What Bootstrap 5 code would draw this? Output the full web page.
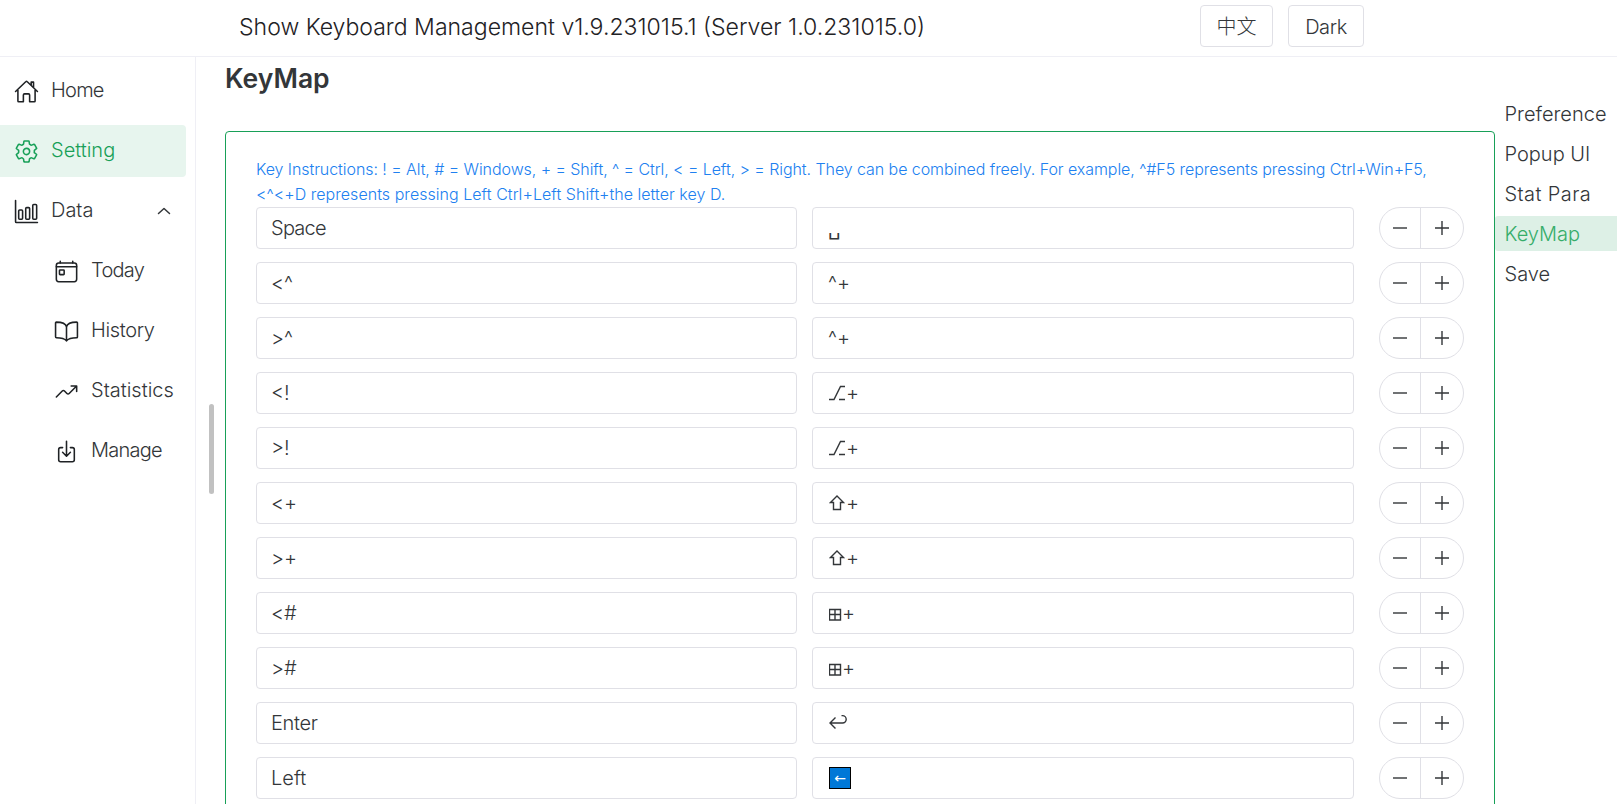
<!DOCTYPE html>
<html lang="en">
<head>
<meta charset="utf-8">
<title>Show Keyboard Management</title>
<link href="https://cdn.jsdelivr.net/npm/bootstrap@5.3.0/dist/css/bootstrap.min.css" rel="stylesheet">
<style>
  body { font-family: Inter, "Noto Sans CJK SC", "DejaVu Sans", sans-serif; font-size: 20px; font-weight: 300; color: #333639; line-height: 1.5; height: 804px; overflow: hidden; }
  .topbar { height: 57px; border-bottom: 1px solid #efeff5; padding-left: 239px; }
  .app-title { width: 961px; font-size: 23.05px; color: #1f2225; padding-bottom: 2px; }
  .topbar .btn { height: 42px; padding: 1px 0 0; font-size: 20px; font-weight: 300; color: #333639; border: 1px solid #e0e0e6; border-radius: 4px; margin: 5px 15px 0 0; }
  .topbar .btn + .btn { letter-spacing: -.4px; }
  .side { width: 196px; border-right: 1px solid #efeff5; padding-top: 8px; }
  .side a { display: flex; align-items: center; height: 52px; width: 186px; margin-bottom: 8px; padding-left: 14px; border-radius: 0 4px 4px 0; color: #333639; text-decoration: none; }
  .side a.sub { padding-left: 54px; }
  .side a span { margin-left: 12px; padding-bottom: 2px; }
  .side svg { width: 25px; height: 25px; fill: none; stroke: #1f2225; stroke-width: 32; stroke-linecap: round; stroke-linejoin: round; }
  .side a.active { background: #e7f5ee; color: #18a058; }
  .side a.active svg { stroke: #18a058; }
  .side a svg.chev { width: 16px; height: 16px; margin-left: auto; margin-right: 14px; stroke-width: 48; stroke: #333639; }
  .tight { letter-spacing: -.75px; }
  .snug { letter-spacing: -.35px; }
  .thumb { width: 5px; height: 90px; border-radius: 3px; background: #c1c1c1; margin: 347px 11px 0 13px; }
  .content { width: 1270px; }
  h2 { font-size: 26.5px; font-weight: 600; line-height: 43px; margin: 0 0 31px; }
  .panel { border: 1px solid #18a058; border-radius: 4px; padding: 25px 30px 0; height: 700px; }
  .hint { font-size: 16px; line-height: 25px; color: #2080f0; margin: 0; letter-spacing: .04px; white-space: nowrap; }
  .hint .line-a { letter-spacing: -.068px; }
  .keyrow { height: 42px; margin-bottom: 13px; gap: 15px; }
  .field { width: 542px; height: 42px; border: 1px solid #e0e0e6; border-radius: 4px; padding: 0 15px; line-height: 41px; white-space: pre; overflow: hidden; }
  .field:first-child { width: 541px; padding-left: 14px; }
  .pm { width: 85px; height: 42px; margin-left: 10px; border: 1px solid #e0e0e6; border-radius: 21px; }
  .pm svg { width: 16px; height: 16px; stroke: #333639; stroke-width: 1.4; fill: none; }
  .pm div { width: 40px; }
  .pm div + div { width: 43px; border-left: 1px solid #e0e0e6; }
  .sym { font-family: "DejaVu Sans", sans-serif; font-weight: 400; }
  .glyph { width: 20px; height: 20px; fill: none; stroke: #333639; stroke-width: 1.4; vertical-align: -3px; margin-left: 1px; margin-right: -3px; }
  .emoji { display: inline-flex; width: 22px; height: 22px; background: #0078d7; border: 1px solid #000; color: #fff; align-items: center; justify-content: center; font: 400 14px "DejaVu Sans", sans-serif; margin: 9px 0 0 1px; vertical-align: top; }
  .anchors { padding-top: 39px; }
  .anchors a { display: block; height: 35px; width: 122px; line-height: 37px; margin-bottom: 5px; padding-left: 9.5px; color: #333639; text-decoration: none; border-radius: 3px 0 0 3px; }
  .anchors a.active { background: #ddf0e6; color: #36ad6a; }
</style>
</head>
<body>
<header class="topbar d-flex">
  <div class="app-title d-flex align-items-center">Show Keyboard Management v1.9.231015.1 (Server 1.0.231015.0)</div>
  <button class="btn" style="width:73px">中文</button>
  <button class="btn" style="width:76px">Dark</button>
</header>
<div class="d-flex">
  <nav class="side flex-shrink-0" style="height:747px">
    <a href="#"><svg viewBox="0 0 512 512"><path d="M80 212v236a16 16 0 0016 16h96V328a24 24 0 0124-24h80a24 24 0 0124 24v136h96a16 16 0 0016-16V212M480 256L266.89 52c-5-5.28-16.69-5.34-21.78 0L32 256M400 179V64h-48v69"/></svg><span class="tight">Home</span></a>
    <a href="#" class="active"><svg viewBox="0 0 512 512"><path d="M262.29 192.31a64 64 0 1057.4 57.4 64.13 64.13 0 00-57.4-57.4zM416.39 256a154.34 154.34 0 01-1.53 20.79l45.21 35.46a10.81 10.81 0 012.45 13.75l-42.77 74a10.81 10.81 0 01-13.14 4.59l-44.9-18.08a16.11 16.11 0 00-15.17 1.75A164.48 164.48 0 01325 400.8a15.94 15.94 0 00-8.82 12.14l-6.73 47.89a11.08 11.08 0 01-10.68 9.17h-85.54a11.11 11.11 0 01-10.69-8.87l-6.72-47.82a16.07 16.07 0 00-9-12.22 155.3 155.3 0 01-21.46-12.57 16 16 0 00-15.11-1.71l-44.89 18.07a10.81 10.81 0 01-13.14-4.58l-42.77-74a10.8 10.8 0 012.45-13.75l38.21-30a16.05 16.05 0 006-14.08c-.36-4.17-.58-8.33-.58-12.5s.21-8.27.58-12.35a16 16 0 00-6.07-13.94l-38.19-30A10.81 10.81 0 0149.48 186l42.77-74a10.81 10.81 0 0113.14-4.59l44.9 18.08a16.11 16.11 0 0015.17-1.75A164.48 164.48 0 01187 111.2a15.94 15.94 0 008.82-12.14l6.73-47.89A11.08 11.08 0 01213.23 42h85.54a11.11 11.11 0 0110.69 8.87l6.72 47.82a16.07 16.07 0 009 12.22 155.3 155.3 0 0121.46 12.57 16 16 0 0015.11 1.71l44.89-18.07a10.81 10.81 0 0113.14 4.58l42.77 74a10.8 10.8 0 01-2.45 13.75l-38.21 30a16.05 16.05 0 00-6.05 14.08c.33 4.14.55 8.3.55 12.47z"/></svg><span>Setting</span></a>
    <a href="#"><svg viewBox="0 0 512 512"><path d="M32 32v432a16 16 0 0016 16h432"/><rect x="96" y="224" width="80" height="192" rx="20"/><rect x="240" y="176" width="80" height="240" rx="20"/><rect x="384" y="112" width="80" height="304" rx="20"/></svg><span>Data</span><svg class="chev" viewBox="0 0 512 512"><path d="M80 336l176-160 176 160"/></svg></a>
    <a href="#" class="sub"><svg viewBox="0 0 512 512"><rect x="48" y="80" width="416" height="384" rx="48"/><path d="M128 48v32M384 48v32M464 160H48"/><rect x="112" y="224" width="96" height="96" rx="13"/></svg><span class="tight">Today</span></a>
    <a href="#" class="sub"><svg viewBox="0 0 512 512"><path d="M256 160c16-63.16 76.43-95.41 208-96a15.94 15.94 0 0116 16v288a16 16 0 01-16 16c-128 0-177.45 25.81-208 64-30.37-38-80-64-208-64-9.88 0-16-8.05-16-17.93V80a15.94 15.94 0 0116-16c131.57.59 192 32.84 208 96zM256 160v288"/></svg><span class="snug">History</span></a>
    <a href="#" class="sub"><svg viewBox="0 0 512 512"><path d="M352 144h112v112M48 368l121.37-121.37a32 32 0 0145.26 0l50.74 50.74a32 32 0 0045.26 0L448 160"/></svg><span>Statistics</span></a>
    <a href="#" class="sub"><svg viewBox="0 0 512 512"><path d="M336 176h40a40 40 0 0140 40v208a40 40 0 01-40 40H136a40 40 0 01-40-40V216a40 40 0 0140-40h40M176 272l80 80 80-80M256 48v288"/></svg><span class="tight">Manage</span></a>
  </nav>
  <div class="thumb flex-shrink-0"></div>
  <main class="content flex-shrink-0">
    <h2>KeyMap</h2>
    <section class="panel">
      <p class="hint"><span class="line-a">Key Instructions: ! = Alt, # = Windows, + = Shift, ^ = Ctrl, &lt; = Left, &gt; = Right. They can be combined freely. For example, ^#F5 represents pressing Ctrl+Win+F5,</span><br>&lt;^&lt;+D represents pressing Left Ctrl+Left Shift+the letter key D.</p>
      <div id="rows"></div>
    </section>
  </main>
  <nav class="anchors flex-shrink-0">
    <a href="#">Preference</a><a href="#">Popup UI</a><a href="#" style="letter-spacing:.4px">Stat Para</a><a href="#" class="active">KeyMap</a><a href="#">Save</a>
  </nav>
</div>
<script>
  const sym = c => `<span class="sym">${c}</span>`;
  const glyph = d => `<svg class="glyph" viewBox="0 0 20 20"><path d="${d}"/></svg>`;
  const option = glyph('M0 16.500h5L11.500 3.500H16M10 16.500h6');
  const shift = glyph('M8 3L14.500 9.500h-3v7h-7v-7h-3z');
  const win = '<svg class="glyph" style="width:16px" viewBox="0 0 16 20"><path d="M.5 6.500h11v10.500H.5zM6 6.500V17M.5 11.500h11"/></svg>';
  const enter = glyph('M6.500 4.500L1 10l5.500 5.500M1 10h12.500a3.700 3.700 0 0 0 0-7.400H12.500');
  const keys = [
    ['<span class="tight">Space</span>', sym('␣')], ['&lt;^', '^+'], ['&gt;^', '^+'],
    ['&lt;!', option + '+'], ['&gt;!', option + '+'],
    ['&lt;+', shift + '+'], ['&gt;+', shift + '+'],
    ['&lt;#', win + '+'], ['&gt;#', win + '+'],
    ['<span class="snug">Enter</span>', enter], ['Left', '<span class="emoji">←</span>']
  ];
  document.getElementById('rows').innerHTML = keys.map(([k, v]) => `
    <div class="keyrow d-flex"><div class="field">${k}</div><div class="field">${v}</div>
      <div class="pm d-flex flex-shrink-0">
        <div class="d-flex align-items-center justify-content-center"><svg viewBox="0 0 16 16"><path d="M1 8h14"/></svg></div>
        <div class="d-flex align-items-center justify-content-center"><svg viewBox="0 0 16 16"><path d="M1 8h14M8 1v14"/></svg></div>
      </div></div>`).join('');
</script>
<script src="https://cdn.jsdelivr.net/npm/bootstrap@5.3.0/dist/js/bootstrap.bundle.min.js"></script>
</body>
</html>
